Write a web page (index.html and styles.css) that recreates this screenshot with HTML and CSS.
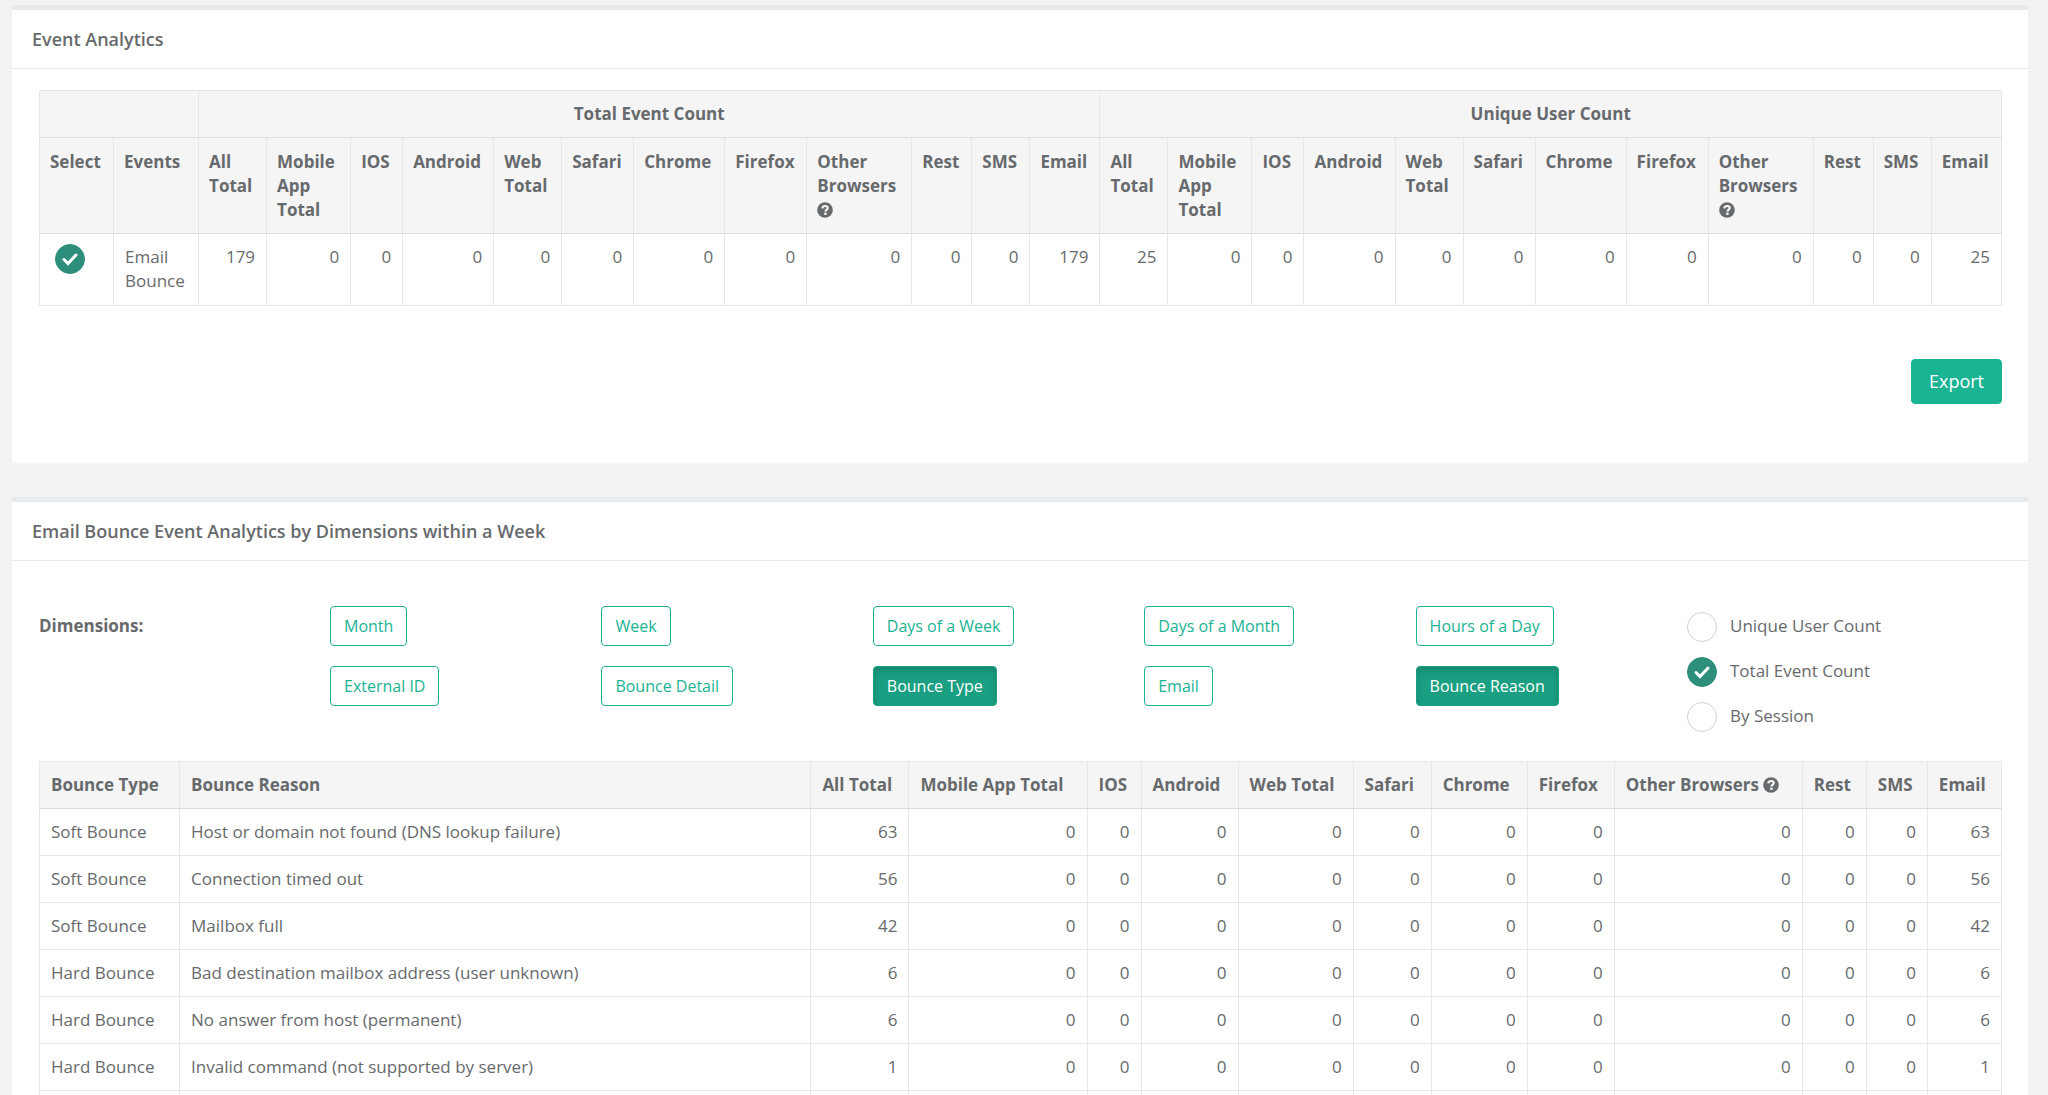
FILE: index.html
```html
<!DOCTYPE html>
<html lang="en">
<head>
    <meta charset="utf-8">
    <title>Event Analytics</title>
    <link rel="stylesheet" href="styles.css">
</head>
<body>
    <!-- shared icons -->
    <svg class="sprite" aria-hidden="true">
        <symbol id="icon-check" viewBox="0 0 30 30">
            <path d="M9 15.5l4 4 8-8.5" fill="none" stroke="currentColor" stroke-width="3" stroke-linecap="round" stroke-linejoin="miter"/>
        </symbol>
        <symbol id="icon-help" viewBox="0 0 16 16">
            <circle cx="8" cy="8" r="7.8" fill="currentColor"/>
            <path d="M5.3 6.4C5.5 4.6 6.7 4 8.1 4c1.5 0 2.6.8 2.6 2.1 0 1.7-2.3 1.7-2.3 3.4" fill="none" stroke="#f5f5f6" stroke-width="2.2"/>
            <rect x="7.2" y="10.6" width="2.4" height="2.3" fill="#f5f5f6"/>
        </symbol>
    </svg>

    <section class="ibox">
        <div class="ibox-title"><h5>Event Analytics</h5></div>
        <div class="ibox-content">
            <table class="table events-table">
                <colgroup>
                    <col class="w-select"><col class="w-events">
                    <col class="w-all"><col class="w-mobile"><col class="w-ios"><col class="w-android"><col class="w-web"><col class="w-safari"><col class="w-chrome"><col class="w-firefox"><col class="w-other"><col class="w-rest"><col class="w-sms"><col class="w-email">
                    <col class="w-all"><col class="w-mobile"><col class="w-ios"><col class="w-android"><col class="w-web"><col class="w-safari"><col class="w-chrome"><col class="w-firefox"><col class="w-other"><col class="w-rest"><col class="w-sms"><col class="w-email">
                </colgroup>
                <thead>
                    <tr class="group-row">
                        <th colspan="2"></th>
                        <th colspan="12">Total Event Count</th>
                        <th colspan="12">Unique User Count</th>
                    </tr>
                    <tr class="name-row">
                        <th>Select</th>
                        <th>Events</th>
                        <th>All Total</th>
                        <th>Mobile App Total</th>
                        <th>IOS</th>
                        <th>Android</th>
                        <th>Web Total</th>
                        <th>Safari</th>
                        <th>Chrome</th>
                        <th>Firefox</th>
                        <th>Other Browsers <svg class="help"><use href="#icon-help"/></svg></th>
                        <th>Rest</th>
                        <th>SMS</th>
                        <th>Email</th>
                        <th>All Total</th>
                        <th>Mobile App Total</th>
                        <th>IOS</th>
                        <th>Android</th>
                        <th>Web Total</th>
                        <th>Safari</th>
                        <th>Chrome</th>
                        <th>Firefox</th>
                        <th>Other Browsers <svg class="help"><use href="#icon-help"/></svg></th>
                        <th>Rest</th>
                        <th>SMS</th>
                        <th>Email</th>
                    </tr>
                </thead>
                <tbody>
                    <tr>
                        <td class="select-cell">
                            <span class="radio"><input type="radio" name="event" aria-label="Email Bounce" checked><svg><use href="#icon-check"/></svg></span>
                        </td>
                        <td class="text">Email Bounce</td>
                        <td>179</td><td>0</td><td>0</td><td>0</td><td>0</td><td>0</td><td>0</td><td>0</td><td>0</td><td>0</td><td>0</td><td>179</td>
                        <td>25</td><td>0</td><td>0</td><td>0</td><td>0</td><td>0</td><td>0</td><td>0</td><td>0</td><td>0</td><td>0</td><td>25</td>
                    </tr>
                </tbody>
            </table>
            <div class="actions">
                <button type="button" class="btn btn-primary">Export</button>
            </div>
        </div>
    </section>

    <section class="ibox">
        <div class="ibox-title"><h5>Email Bounce Event Analytics by Dimensions within a Week</h5></div>
        <div class="ibox-content">
            <div class="filters">
                <strong class="filters-label">Dimensions:</strong>
                <div class="dimensions">
                    <button type="button" class="btn btn-outline">Month</button>
                    <button type="button" class="btn btn-outline">Week</button>
                    <button type="button" class="btn btn-outline">Days of a Week</button>
                    <button type="button" class="btn btn-outline">Days of a Month</button>
                    <button type="button" class="btn btn-outline">Hours of a Day</button>
                    <button type="button" class="btn btn-outline">External ID</button>
                    <button type="button" class="btn btn-outline">Bounce Detail</button>
                    <button type="button" class="btn btn-outline active">Bounce Type</button>
                    <button type="button" class="btn btn-outline">Email</button>
                    <button type="button" class="btn btn-outline active">Bounce Reason</button>
                </div>
                <div class="counts">
                    <label class="count-option">
                        <span class="radio"><input type="radio" name="count"><svg><use href="#icon-check"/></svg></span>
                        Unique User Count
                    </label>
                    <label class="count-option">
                        <span class="radio"><input type="radio" name="count" checked><svg><use href="#icon-check"/></svg></span>
                        Total Event Count
                    </label>
                    <label class="count-option">
                        <span class="radio"><input type="radio" name="count"><svg><use href="#icon-check"/></svg></span>
                        By Session
                    </label>
                </div>
            </div>

            <table class="table bounce-table">
                <colgroup>
                    <col class="w-type"><col class="w-reason"><col class="w-all"><col class="w-mobile"><col class="w-ios"><col class="w-android"><col class="w-web"><col class="w-safari"><col class="w-chrome"><col class="w-firefox"><col class="w-other"><col class="w-rest"><col class="w-sms"><col class="w-email">
                </colgroup>
                <thead>
                    <tr>
                        <th>Bounce Type</th>
                        <th>Bounce Reason</th>
                        <th>All Total</th>
                        <th>Mobile App Total</th>
                        <th>IOS</th>
                        <th>Android</th>
                        <th>Web Total</th>
                        <th>Safari</th>
                        <th>Chrome</th>
                        <th>Firefox</th>
                        <th>Other Browsers <svg class="help"><use href="#icon-help"/></svg></th>
                        <th>Rest</th>
                        <th>SMS</th>
                        <th>Email</th>
                    </tr>
                </thead>
                <tbody>
                    <tr>
                        <td class="text">Soft Bounce</td><td class="text">Host or domain not found (DNS lookup failure)</td>
                        <td>63</td><td>0</td><td>0</td><td>0</td><td>0</td><td>0</td><td>0</td><td>0</td><td>0</td><td>0</td><td>0</td><td>63</td>
                    </tr>
                    <tr>
                        <td class="text">Soft Bounce</td><td class="text">Connection timed out</td>
                        <td>56</td><td>0</td><td>0</td><td>0</td><td>0</td><td>0</td><td>0</td><td>0</td><td>0</td><td>0</td><td>0</td><td>56</td>
                    </tr>
                    <tr>
                        <td class="text">Soft Bounce</td><td class="text">Mailbox full</td>
                        <td>42</td><td>0</td><td>0</td><td>0</td><td>0</td><td>0</td><td>0</td><td>0</td><td>0</td><td>0</td><td>0</td><td>42</td>
                    </tr>
                    <tr>
                        <td class="text">Hard Bounce</td><td class="text">Bad destination mailbox address (user unknown)</td>
                        <td>6</td><td>0</td><td>0</td><td>0</td><td>0</td><td>0</td><td>0</td><td>0</td><td>0</td><td>0</td><td>0</td><td>6</td>
                    </tr>
                    <tr>
                        <td class="text">Hard Bounce</td><td class="text">No answer from host (permanent)</td>
                        <td>6</td><td>0</td><td>0</td><td>0</td><td>0</td><td>0</td><td>0</td><td>0</td><td>0</td><td>0</td><td>0</td><td>6</td>
                    </tr>
                    <tr>
                        <td class="text">Hard Bounce</td><td class="text">Invalid command (not supported by server)</td>
                        <td>1</td><td>0</td><td>0</td><td>0</td><td>0</td><td>0</td><td>0</td><td>0</td><td>0</td><td>0</td><td>0</td><td>1</td>
                    </tr>
                    <tr>
                        <td></td><td></td><td></td><td></td><td></td><td></td><td></td><td></td><td></td><td></td><td></td><td></td><td></td><td></td>
                    </tr>
                </tbody>
            </table>
        </div>
    </section>
</body>
</html>
```

FILE: styles.css
```css
* {
    box-sizing: border-box;
}
body {
    margin: 0;
    padding: 5px 20px 0 12px;
    height: 100vh;
    overflow: hidden;
    background-color: #f3f3f4;
    color: #676a6c;
    font-family: "Open Sans", Arial, sans-serif;
    font-size: 17px;
    line-height: 24px;
}
.sprite {
    display: none;
}

/* Panels */
.ibox {
    margin-bottom: 34px;
    background-color: #ffffff;
    border-top: 5px solid #e7eaec;
}
.ibox-title {
    padding: 17px 20px;
    border-bottom: 1px solid #e7eaec;
}
.ibox-title h5 {
    margin: 0;
    font-size: 18px;
    font-weight: 600;
    line-height: 24px;
}
.ibox-content {
    padding: 21px 26px 59px 27px;
}

/* Tables */
.table {
    width: 100%;
    border-collapse: collapse;
    border: 1px solid #e7e7e7;
}
.table th,
.table td {
    padding: 11px;
    border: 1px solid #e7e7e7;
    vertical-align: top;
}
.table th {
    background-color: #f5f5f6;
    border-bottom-color: #dddddd;
    font-weight: 700;
    text-align: left;
}
.table td {
    text-align: right;
}
.table td.text {
    text-align: left;
}
.table .group-row th {
    text-align: center;
}
.table .name-row th {
    padding: 12px 10px 11px;
}
.events-table td {
    padding-bottom: 12px;
}
.table .select-cell {
    padding: 10px 15px;
    text-align: left;
}
.help {
    width: 16px;
    height: 16px;
    vertical-align: -2px;
}

.w-select { width: 74px; }
.w-events { width: 85px; }
.w-all { width: 68px; }
.w-mobile { width: 84px; }
.w-ios { width: 52px; }
.w-android { width: 91px; }
.w-web { width: 68px; }
.w-safari { width: 72px; }
.w-chrome { width: 91px; }
.w-firefox { width: 82px; }
.w-other { width: 105px; }
.w-rest { width: 60px; }
.w-sms { width: 58px; }
.w-email { width: 70px; }

.bounce-table .w-type { width: 140px; }
.bounce-table .w-reason { width: 631px; }
.bounce-table .w-all { width: 98px; }
.bounce-table .w-mobile { width: 178px; }
.bounce-table .w-ios { width: 54px; }
.bounce-table .w-android { width: 97px; }
.bounce-table .w-web { width: 115px; }
.bounce-table .w-safari { width: 78px; }
.bounce-table .w-chrome { width: 96px; }
.bounce-table .w-firefox { width: 87px; }
.bounce-table .w-other { width: 188px; }
.bounce-table .w-rest { width: 64px; }
.bounce-table .w-sms { width: 61px; }
.bounce-table .w-email { width: 74px; }

/* Buttons */
.actions {
    display: flex;
    justify-content: flex-end;
    margin-top: 53px;
}
.btn {
    font-family: inherit;
    border: 1px solid #1ab394;
    border-radius: 4px;
    cursor: pointer;
}
.btn-primary {
    padding: 9px 17px;
    background-color: #1ab394;
    color: #ffffff;
    font-size: 18px;
    line-height: 25px;
}
.btn-outline {
    padding: 7px 13px;
    background-color: #ffffff;
    color: #1ab394;
    font-size: 16px;
    line-height: 24px;
}
.btn-outline.active {
    background-color: #1a9f82;
    border-color: #1a9f82;
    color: #ffffff;
    box-shadow: inset 0 4px 7px rgba(0, 0, 0, 0.15);
}

/* Dimension filters */
.filters {
    display: grid;
    grid-template-columns: 291px 1fr 315px;
    padding: 24px 0 29px;
}
.filters-label {
    padding-top: 8px;
}
.dimensions {
    display: grid;
    grid-template-columns: repeat(5, 1fr);
    gap: 20px 0;
    align-content: start;
    justify-items: start;
}
.counts {
    display: flex;
    flex-direction: column;
    gap: 15px;
    padding-top: 6px;
}
.count-option {
    display: flex;
    gap: 13px;
    line-height: 28px;
}

/* Round radio with a tick */
.radio {
    display: inline-grid;
    width: 30px;
    height: 30px;
    vertical-align: top;
}
.radio input,
.radio svg {
    grid-area: 1 / 1;
    width: 30px;
    height: 30px;
    margin: 0;
}
.radio input {
    appearance: none;
    border: 1px solid #d4cfc9;
    border-radius: 50%;
    background-color: #ffffff;
}
.radio input:checked {
    border-color: #2d8f7b;
    background-color: #2d8f7b;
}
.radio svg {
    color: #ffffff;
    pointer-events: none;
}
```
